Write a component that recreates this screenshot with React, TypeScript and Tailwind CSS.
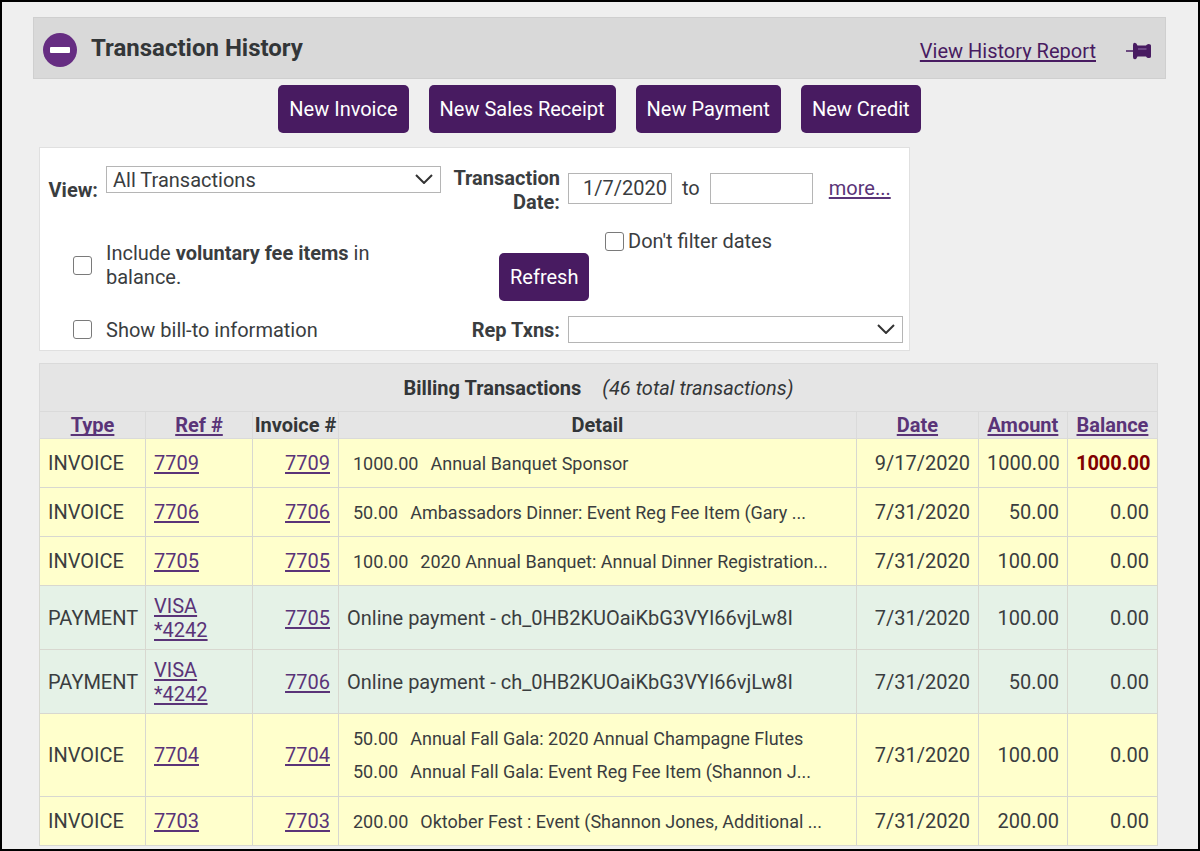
import { useState, type ReactNode } from 'react';

type Item = { amount: string; text: string };
type Txn = {
  kind: 'INVOICE' | 'PAYMENT';
  ref: string[];
  invoice: string;
  items?: Item[];
  note?: string;
  date: string;
  amount: string;
  balance: string;
  due?: boolean;
};

const transactions: Txn[] = [
  { kind: 'INVOICE', ref: ['7709'], invoice: '7709', items: [{ amount: '1000.00', text: 'Annual Banquet Sponsor' }], date: '9/17/2020', amount: '1000.00', balance: '1000.00', due: true },
  { kind: 'INVOICE', ref: ['7706'], invoice: '7706', items: [{ amount: '50.00', text: 'Ambassadors Dinner: Event Reg Fee Item (Gary ...' }], date: '7/31/2020', amount: '50.00', balance: '0.00' },
  { kind: 'INVOICE', ref: ['7705'], invoice: '7705', items: [{ amount: '100.00', text: '2020 Annual Banquet: Annual Dinner Registration...' }], date: '7/31/2020', amount: '100.00', balance: '0.00' },
  { kind: 'PAYMENT', ref: ['VISA', '*4242'], invoice: '7705', note: 'Online payment - ch_0HB2KUOaiKbG3VYI66vjLw8I', date: '7/31/2020', amount: '100.00', balance: '0.00' },
  { kind: 'PAYMENT', ref: ['VISA', '*4242'], invoice: '7706', note: 'Online payment - ch_0HB2KUOaiKbG3VYI66vjLw8I', date: '7/31/2020', amount: '50.00', balance: '0.00' },
  { kind: 'INVOICE', ref: ['7704'], invoice: '7704', items: [{ amount: '50.00', text: 'Annual Fall Gala: 2020 Annual Champagne Flutes' }, { amount: '50.00', text: 'Annual Fall Gala: Event Reg Fee Item (Shannon J...' }], date: '7/31/2020', amount: '100.00', balance: '0.00' },
  { kind: 'INVOICE', ref: ['7703'], invoice: '7703', items: [{ amount: '200.00', text: 'Oktober Fest : Event (Shannon Jones, Additional ...' }], date: '7/31/2020', amount: '200.00', balance: '0.00' },
];

const link = 'text-[#5a3478] underline decoration-2 underline-offset-2 [text-decoration-skip-ink:none]';
const cell = 'border border-[#d8d8d0] px-2';
const checkbox =
  'size-[19px] shrink-0 appearance-none rounded-[3px] border border-[#7a7a7a] bg-white checked:bg-[#481b61]';

function PurpleButton({ children }: { children: ReactNode }) {
  return (
    <button type="button" className="h-12 rounded-[5px] bg-[#481b61] px-[11px] text-white">
      {children}
    </button>
  );
}

function Dropdown({ id, options }: { id: string; options: string[] }) {
  return (
    <div className="relative w-full">
      <select id={id} className="block h-[27px] w-full appearance-none border border-[#b5b5b5] bg-white px-1.5 leading-6">
        {options.map((o) => (
          <option key={o}>{o}</option>
        ))}
      </select>
      <svg viewBox="0 0 18 10" fill="none" stroke="#333" strokeWidth="2" className="pointer-events-none absolute top-2 right-2 h-[10px] w-[18px]">
        <path d="M1 1l8 8 8-8" />
      </svg>
    </div>
  );
}

function PushPin() {
  return (
    <svg viewBox="0 0 26 18" fill="#481b61" className="h-[18px] w-[26px]">
      <path d="M0 8.200h7V3Q7 .8 8.800.8q1.800 0 2.700 2.700H20q.8-1.500 2.700-1.600 2.300 0 2.300 1.600v11q0 1.700-2.300 1.600-1.900-.1-2.700-1.600h-8.500q-.9 2.700-2.700 2.700Q7 17.200 7 15V9.800H0z" />
      <path d="M12 7h8.500" stroke="#7d5a96" strokeWidth="1.400" />
    </svg>
  );
}

export default function App() {
  const [from, setFrom] = useState('1/7/2020');
  const [to, setTo] = useState('');
  return (
    <main className="min-h-screen border-2 border-black bg-[#efefef] pt-[15px] pr-8 pl-[31px] font-['Roboto',sans-serif] text-xl leading-6 text-[#3a3d3f]">
      <header className="flex h-[62px] items-center border border-[#cfcfcf] bg-[#d9d9d9] pr-[13px] pl-[9px]">
        <button type="button" aria-label="Collapse" className="mt-1 flex size-[34px] items-center justify-center rounded-full bg-[#662d82]">
          <span className="h-[6px] w-5 rounded-[1px] bg-white" />
        </button>
        <h1 className="ml-[14px] text-2xl font-bold text-[#333638]">Transaction History</h1>
        <div className="mt-1.5 ml-auto flex items-center gap-[30px]">
          <a href="#report" className="text-[#481b61] underline decoration-2 underline-offset-2 [text-decoration-skip-ink:none]">View History Report</a>
          <button type="button" aria-label="Pin">
            <PushPin />
          </button>
        </div>
      </header>

      <div className="mt-[6px] flex justify-center gap-5">
        <PurpleButton>New Invoice</PurpleButton>
        <PurpleButton>New Sales Receipt</PurpleButton>
        <PurpleButton>New Payment</PurpleButton>
        <PurpleButton>New Credit</PurpleButton>
      </div>

      <form onSubmit={(e) => e.preventDefault()} className="mt-[14px] ml-[6px] grid w-fit grid-cols-[58px_335px_111px_335px] gap-x-2 border border-[#e0e0e0] bg-white pt-[18px] pr-1.5 pb-[7px]">
        <label htmlFor="view" className="self-center text-right font-bold">View:</label>
        <Dropdown id="view" options={['All Transactions']} />
        <label htmlFor="from" className="text-right font-bold">Transaction Date:</label>
        <div className="flex items-center pb-1">
          <input id="from" value={from} onChange={(e) => setFrom(e.target.value)} className="h-[31px] w-[104px] border border-[#b5b5b5] bg-white px-1 text-right" />
          <label htmlFor="to" className="mx-[10px]">to</label>
          <input id="to" value={to} onChange={(e) => setTo(e.target.value)} className="h-[31px] w-[103px] border border-[#b5b5b5] bg-white px-1 text-right" />
          <a href="#more" className={`ml-4 ${link}`}>more...</a>
        </div>

        <div className="mt-[15px] flex items-center justify-end pr-1.5">
          <input id="voluntary" type="checkbox" className={checkbox} />
        </div>
        <label htmlFor="voluntary" className="mt-[15px] self-center">
          Include <b className="font-bold">voluntary fee items</b> in
          <br />
          balance.
        </label>
        <div className="col-span-2 mt-[15px] flex flex-col items-start pl-[50px]">
          <label className="ml-[106px] flex items-center gap-1">
            <input type="checkbox" className={checkbox} />
            Don't filter dates
          </label>
          <PurpleButton>Refresh</PurpleButton>
        </div>

        <div className="mt-[15px] flex items-center justify-end pr-1.5">
          <input id="billto" type="checkbox" className={checkbox} />
        </div>
        <label htmlFor="billto" className="mt-[15px] self-center">Show bill-to information</label>
        <label htmlFor="rep" className="mt-[15px] self-center text-right font-bold">Rep Txns:</label>
        <div className="mt-[15px]">
          <Dropdown id="rep" options={['']} />
        </div>
      </form>

      <div className="mt-3 pr-2 pl-[6px]">
        <table className="w-full table-fixed border-collapse">
          <colgroup>
            <col className="w-[106px]" />
            <col className="w-[107px]" />
            <col className="w-[86px]" />
            <col />
            <col className="w-[122px]" />
            <col className="w-[89px]" />
            <col className="w-[90px]" />
          </colgroup>
          <thead className="bg-[#e5e5e5] text-[#333638]">
            <tr className="h-12">
              <th colSpan={7} className="border border-[#dadada] font-bold">
                Billing Transactions <em className="ml-4 font-normal">(46 total transactions)</em>
              </th>
            </tr>
            <tr className="h-[27px]">
              <th className="border border-[#dadada] font-bold"><a href="#type" className={link}>Type</a></th>
              <th className="border border-[#dadada] font-bold"><a href="#ref" className={link}>Ref #</a></th>
              <th className="border border-[#dadada] font-bold whitespace-nowrap">Invoice #</th>
              <th className="border border-[#dadada] font-bold">Detail</th>
              <th className="border border-[#dadada] font-bold"><a href="#date" className={link}>Date</a></th>
              <th className="border border-[#dadada] font-bold"><a href="#amount" className={link}>Amount</a></th>
              <th className="border border-[#dadada] font-bold"><a href="#balance" className={link}>Balance</a></th>
            </tr>
          </thead>
          <tbody>
            {transactions.map((t, i) => (
              <tr key={i} className={t.kind === 'PAYMENT' ? 'h-16 bg-[#e5f2e7]' : 'h-[49px] bg-[#ffffcc]'}>
                <td className={cell}>{t.kind}</td>
                <td className={cell}>
                  <a href={`#${t.invoice}`} className={link}>
                    {t.ref.map((r) => (
                      <span key={r} className="block w-fit">{r}</span>
                    ))}
                  </a>
                </td>
                <td className={`${cell} text-right`}><a href={`#${t.invoice}`} className={link}>{t.invoice}</a></td>
                <td className={cell}>
                  {t.note}
                  {t.items && (
                    <div className={t.items.length > 1 ? 'py-2' : ''}>
                      {t.items.map((it, n) => (
                        <p key={n} className="flex gap-3 pl-1.5 text-lg leading-[33px] whitespace-nowrap">
                          <span>{it.amount}</span>
                          <span>{it.text}</span>
                        </p>
                      ))}
                    </div>
                  )}
                </td>
                <td className={`${cell} text-right`}>{t.date}</td>
                <td className={`${cell} text-right`}>{t.amount}</td>
                <td className={`${cell} text-right ${t.due ? 'font-bold text-[#800000]' : ''}`}>{t.balance}</td>
              </tr>
            ))}
          </tbody>
        </table>
      </div>
    </main>
  );
}
